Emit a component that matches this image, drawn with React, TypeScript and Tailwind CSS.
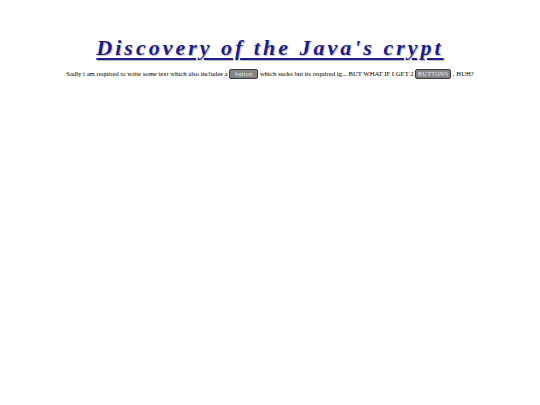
export default function App() {
  return (
    <div className="min-h-[405px] w-full bg-white" style={{ fontFamily: '"Liberation Serif", serif' }}>
      <h1 className="pt-[35px] text-center text-[22px] font-bold italic leading-[26px] tracking-[3px] text-[#1c1c8c] underline decoration-[2px] underline-offset-[3px] [text-shadow:1px_1px_1px_rgba(0,0,0,0.25)]">
        Discovery of the Java's crypt
      </h1>
      <p className="mt-[7px] text-center text-[6.7px] leading-[12px] text-black">
        Sadly i am required to write some text which also includes a{" "}
        <button className="inline-flex h-[10px] w-[29px] items-center justify-center rounded-[2px] border border-[#3a3a3a] bg-[#858585] align-middle text-[6px] leading-[8px] tracking-[0.4px] text-[#eeeeee]">button</button>{" "}
        which sucks but its required ig... BUT WHAT IF I GET 2{" "}
        <button className="inline-flex h-[10px] w-[36px] items-center justify-center rounded-[2px] border border-[#3a3a3a] bg-[#858585] align-middle text-[6px] leading-[8px] tracking-[0.4px] text-[#eeeeee]">BUTTONS</button>{" "}
        , HUH?
      </p>
    </div>
  );
}
